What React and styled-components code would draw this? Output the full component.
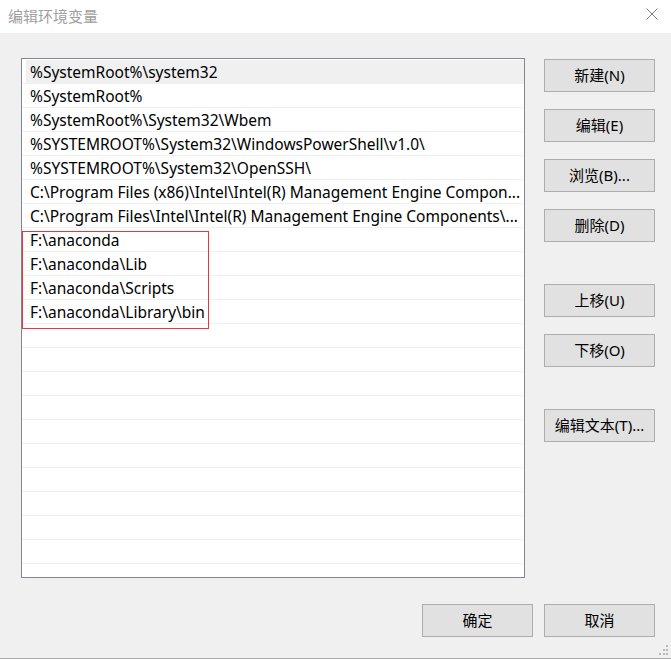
import React from 'react';
import styled, { createGlobalStyle } from 'styled-components';

const GlobalStyle = createGlobalStyle`
  html, body {
    margin: 0;
    padding: 0;
    background: #f0f0f0;
  }
  body {
    font-family: 'Noto Sans', 'Noto Sans CJK SC', sans-serif;
  }
`;

const paths = [
  '%SystemRoot%\\system32',
  '%SystemRoot%',
  '%SystemRoot%\\System32\\Wbem',
  '%SYSTEMROOT%\\System32\\WindowsPowerShell\\v1.0\\',
  '%SYSTEMROOT%\\System32\\OpenSSH\\',
  'C:\\Program Files (x86)\\Intel\\Intel(R) Management Engine Compon...',
  'C:\\Program Files\\Intel\\Intel(R) Management Engine Components\\...',
  'F:\\anaconda',
  'F:\\anaconda\\Lib',
  'F:\\anaconda\\Scripts',
  'F:\\anaconda\\Library\\bin',
];

const TOTAL_ROWS = 21;

const sideButtons = [
  { label: '新建(N)' },
  { label: '编辑(E)' },
  { label: '浏览(B)...' },
  { label: '删除(D)' },
  { label: '上移(U)', spaced: true },
  { label: '下移(O)' },
  { label: '编辑文本(T)...', spaced: true },
];

const App = () => {
  const rows = Array.from({ length: TOTAL_ROWS }, (_, i) => paths[i] || '');
  return (
    <>
      <GlobalStyle />
      <Window>
        <TitleBar>
          <Title>编辑环境变量</Title>
          <CloseButton aria-label="关闭">
            <svg width="12" height="12" viewBox="0 0 12 12">
              <path d="M0.5 0.5 L11.5 11.5 M11.5 0.5 L0.5 11.5" stroke="#7a7a7a" strokeWidth="1" fill="none" />
            </svg>
          </CloseButton>
        </TitleBar>
        <Body>
          <Main>
            <ListBox>
              {rows.map((text, i) => (
                <Row key={i} $selected={i === 0}>
                  {text}
                </Row>
              ))}
              <Highlight />
            </ListBox>
            <SideColumn>
              {sideButtons.map(b => (
                <Button key={b.label} $spaced={b.spaced}>
                  {b.label}
                </Button>
              ))}
            </SideColumn>
          </Main>
          <Footer>
            <Button>确定</Button>
            <Button>取消</Button>
          </Footer>
        </Body>
        <Grip>
          <svg width="12" height="12" viewBox="0 0 12 12">
            <rect x="8" y="0" width="2" height="2" fill="#b8b8b8" />
            <rect x="5" y="4" width="2" height="2" fill="#b8b8b8" />
            <rect x="8" y="4" width="2" height="2" fill="#b8b8b8" />
            <rect x="1" y="8" width="2" height="2" fill="#b8b8b8" />
            <rect x="5" y="8" width="2" height="2" fill="#b8b8b8" />
            <rect x="8" y="8" width="2" height="2" fill="#b8b8b8" />
          </svg>
        </Grip>
      </Window>
    </>
  );
};

const Window = styled.div`
  position: relative;
  width: 671px;
  height: 659px;
  box-sizing: border-box;
  background: #f0f0f0;
  border-bottom: 1px solid #a9a9a9;
  display: flex;
  flex-direction: column;
  overflow: hidden;
`;

const TitleBar = styled.div`
  height: 33px;
  flex-shrink: 0;
  background: #ffffff;
  display: flex;
  align-items: center;
  justify-content: space-between;
  padding: 0 13px 0 8px;
`;

const Title = styled.div`
  font-family: 'Noto Sans CJK SC', sans-serif;
  font-size: 15px;
  color: #a0a0a0;
  margin-top: -3px;
`;

const CloseButton = styled.div`
  width: 12px;
  height: 12px;
  display: flex;
  margin-top: -5px;
  svg {
    display: block;
  }
`;

const Body = styled.div`
  flex: 1;
  display: flex;
  flex-direction: column;
  padding: 25px 16px 0 21px;
`;

const Main = styled.div`
  display: flex;
  align-items: flex-start;
  gap: 19px;
`;

const ListBox = styled.div`
  position: relative;
  width: 504px;
  height: 520px;
  box-sizing: border-box;
  background: #ffffff;
  border: 1px solid #828790;
  padding-top: 1px;
  overflow: hidden;
`;

const Row = styled.div`
  height: 24px;
  box-sizing: border-box;
  border-bottom: 1px solid #f0f0f0;
  padding-left: 8px;
  font-family: 'Noto Sans', sans-serif;
  font-size: 15.5px;
  line-height: 24px;
  color: #000000;
  white-space: nowrap;
  overflow: hidden;
  background: ${p =>
    p.$selected ? 'linear-gradient(to right, #ffffff 4px, #f0f0f0 4px)' : '#ffffff'};
`;

// red annotation drawn over the anaconda entries
const Highlight = styled.div`
  position: absolute;
  left: 0;
  top: 172px;
  width: 187px;
  height: 98px;
  box-sizing: border-box;
  border: 1px solid #e8363b;
  pointer-events: none;
`;

const SideColumn = styled.div`
  display: flex;
  flex-direction: column;
  gap: 17px;
  padding-top: 1px;
`;

const Button = styled.div`
  width: 111px;
  height: 33px;
  box-sizing: border-box;
  background: #e1e1e1;
  border: 1px solid #adadad;
  display: flex;
  align-items: center;
  justify-content: center;
  padding-bottom: 2px;
  font-family: 'Noto Sans', 'Noto Sans CJK SC', sans-serif;
  font-size: 15px;
  color: #000000;
  margin-top: ${p => (p.$spaced ? '25px' : '0')};
`;

const Footer = styled.div`
  display: flex;
  justify-content: flex-end;
  gap: 11px;
  margin-top: 26px;
`;

const Grip = styled.div`
  position: absolute;
  right: 1px;
  bottom: 1px;
  width: 12px;
  height: 12px;
  svg {
    display: block;
  }
`;

export default App;
